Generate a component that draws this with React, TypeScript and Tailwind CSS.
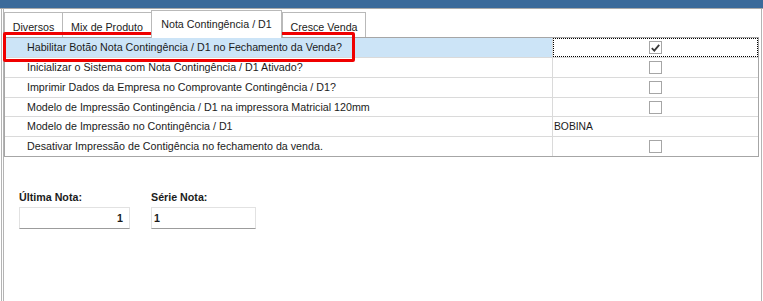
const ROWS = [
  { label: 'Habilitar Botão Nota Contingência / D1 no Fechamento da Venda?', kind: 'check', checked: true, h: 'h-[20px]' },
  { label: 'Inicializar o Sistema com Nota Contingência / D1 Ativado?', kind: 'check', checked: false, h: 'h-[20px]' },
  { label: 'Imprimir Dados da Empresa no Comprovante Contingência / D1?', kind: 'check', checked: false, h: 'h-[20px]' },
  { label: 'Modelo de Impressão Contingência / D1 na impressora Matricial 120mm', kind: 'check', checked: false, h: 'h-[19px]' },
  { label: 'Modelo de Impressão no Contingência / D1', kind: 'text', value: 'BOBINA', h: 'h-[20px]' },
  { label: 'Desativar Impressão de Contigência no fechamento da venda.', kind: 'check', checked: false, h: 'h-[19px]' },
] as const

const TABS = [
  { label: 'Diversos', w: 'w-[59px]' },
  { label: 'Mix de Produto', w: 'w-[90px]' },
  { label: 'Nota Contingência / D1', w: 'w-[131px]', active: true },
  { label: 'Cresce Venda', w: 'w-[84px]' },
]

function Check({ checked }: { checked: boolean }) {
  return (
    <span className="grid h-[13px] w-[13px] place-items-center border border-[#a6a6a6] bg-white">
      {checked ? (
        <svg width="9" height="8" viewBox="0 0 9 8">
          <path d="M0.8 4.2 L3.3 6.6 L8.2 0.9" fill="none" stroke="#3a3a3a" strokeWidth="1.8" />
        </svg>
      ) : null}
    </span>
  )
}

export default function App() {
  return (
    <div className="relative h-[301px] w-[763px] overflow-hidden bg-white font-['Liberation_Sans',Arial,sans-serif] text-[10.7px] text-[#1b1b1b]">
      <div className="h-[8px] bg-[#3b6a9a]" />
      <div className="h-[1px] bg-[#a9a9a9]" />

      <div className="flex h-[292px] pl-[1px]">
        <div className="flex w-[761px] border-l border-r border-[#b4b4b4] pl-[1px]">
          <div className="flex-1 border-l border-[#b4b4b4]">
            {/* tab strip */}
            <div className="flex h-[28px] items-end">
              {TABS.map((t) =>
                t.active ? (
                  <div
                    key={t.label}
                    className={`${t.w} relative z-10 -mb-[1px] flex h-[28px] justify-center border border-b-0 border-[#b9b9b9] bg-white pt-[5px]`}
                  >
                    {t.label}
                  </div>
                ) : (
                  <div
                    key={t.label}
                    className={`${t.w} -mr-[1px] flex h-[25px] justify-center border border-b-0 border-[#b9b9b9] bg-white pt-[6px]`}
                  >
                    {t.label}
                  </div>
                ),
              )}
            </div>

            {/* property grid */}
            <div className="w-[755px] border border-[#a6a6a6]">
              {ROWS.map((r, i) => (
                <div key={r.label} className={`flex ${r.h} ${i < ROWS.length - 1 ? 'border-b border-[#dadada]' : ''}`}>
                  <div
                    className={`flex w-[548px] items-center border-r border-[#dadada] pl-[22px] ${i === 0 ? 'bg-[#cce4f7]' : ''}`}
                  >
                    {r.label}
                  </div>
                  <div
                    className={`flex flex-1 items-center ${r.kind === 'check' ? 'justify-center' : 'pl-[1px]'} ${
                      i === 0 ? 'outline-1 outline-offset-[-1px] outline-dotted outline-black' : ''
                    }`}
                  >
                    {r.kind === 'check' ? <Check checked={r.checked} /> : <span className="text-[10.3px]">{r.value}</span>}
                  </div>
                </div>
              ))}
            </div>

            {/* numbering fields */}
            <div className="mt-[34px] flex gap-[21px] pl-[15px] font-bold">
              <div className="flex flex-col gap-[3px]">
                <span className="leading-[13px]">Última Nota:</span>
                <div className="flex h-[22px] w-[111px] items-center justify-end border border-[#e2e2e2] border-b-[#9c9c9c] pr-[6px]">
                  1
                </div>
              </div>
              <div className="flex flex-col gap-[3px]">
                <span className="leading-[13px]">Série Nota:</span>
                <div className="flex h-[22px] w-[105px] items-center border border-[#e2e2e2] border-b-[#9c9c9c] pl-[2px]">
                  1
                </div>
              </div>
            </div>
          </div>
        </div>
      </div>

      {/* annotation highlight */}
      <div className="absolute left-[3px] top-[32px] h-[30px] w-[352px] rounded-[2px] border-[3px] border-[#f00000]" />
    </div>
  )
}
